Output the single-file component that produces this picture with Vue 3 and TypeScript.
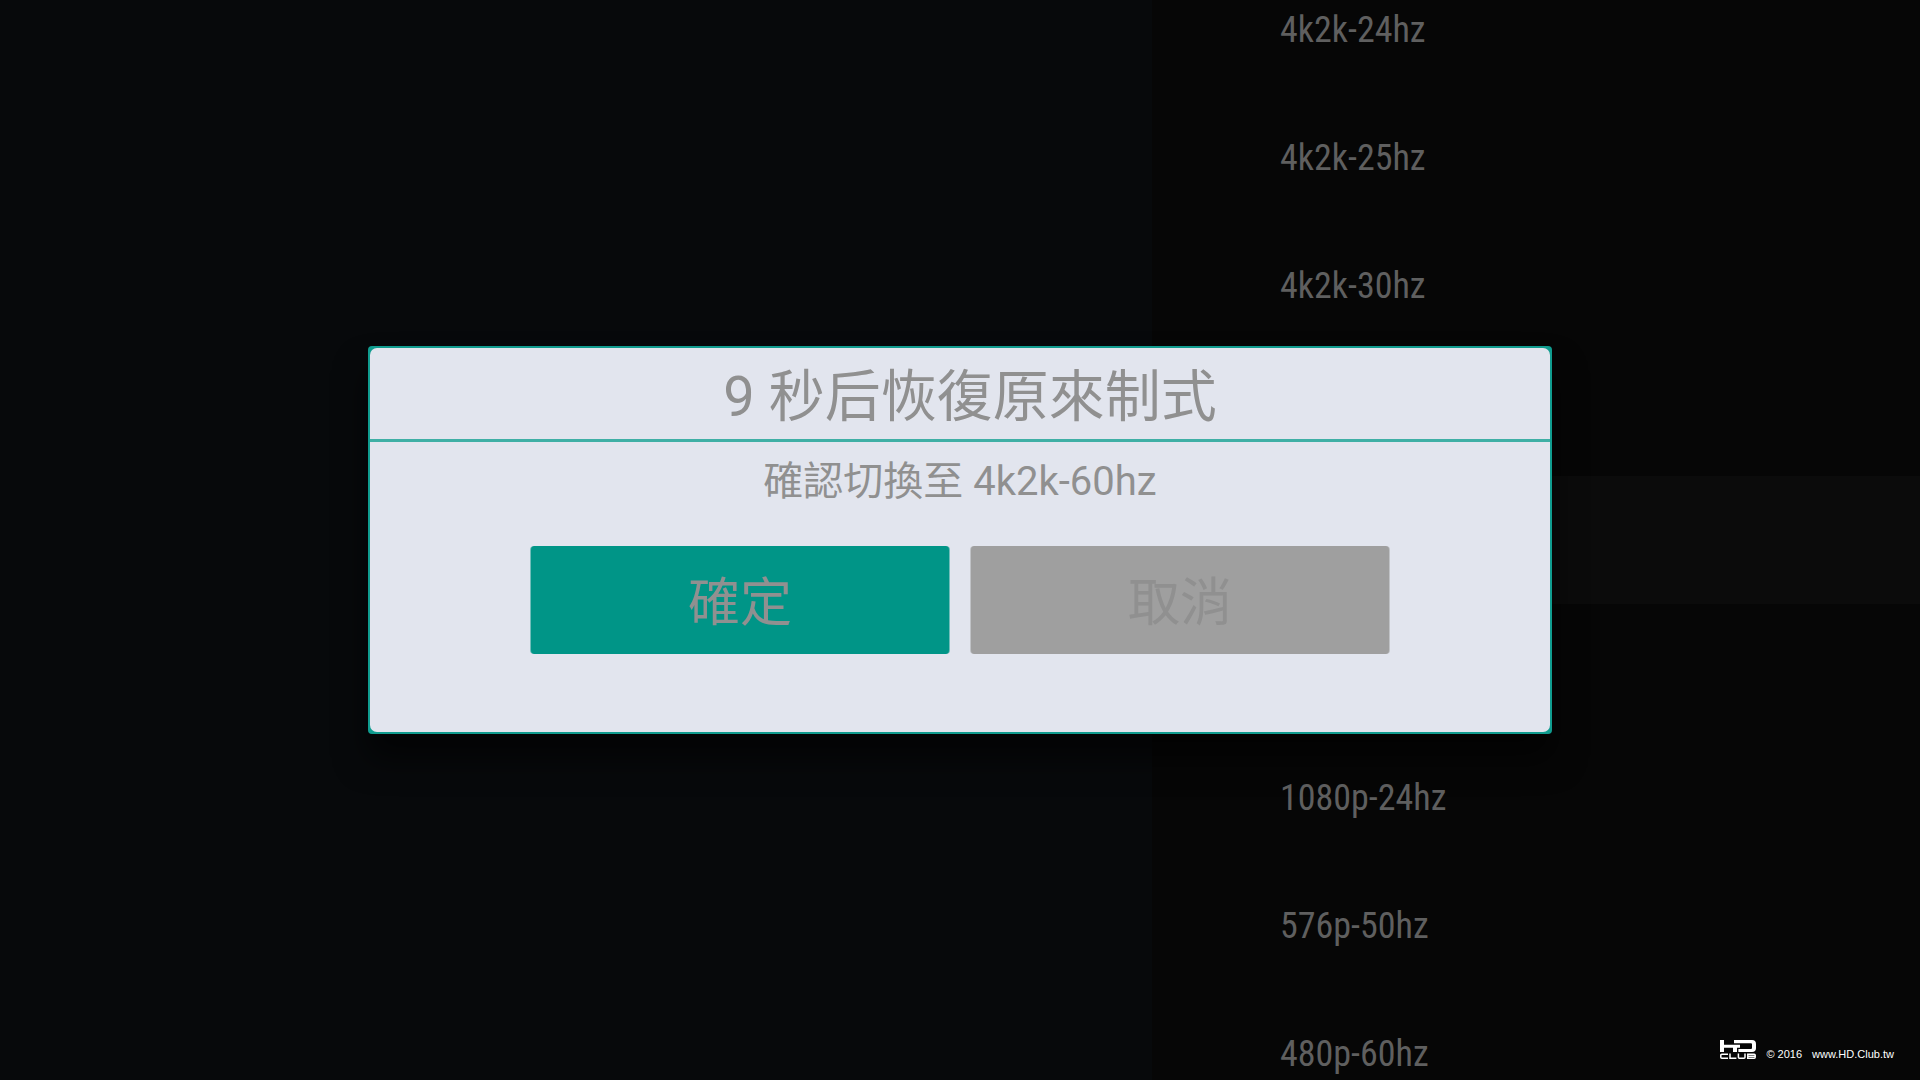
<script setup lang="ts">
interface Mode {
  id: number
  label: string
  selected?: boolean
}

const modes: Mode[] = [
  { id: 1, label: '4k2k-24hz' },
  { id: 2, label: '4k2k-25hz' },
  { id: 3, label: '4k2k-30hz' },
  { id: 4, label: '' },
  { id: 5, label: '', selected: true },
  { id: 6, label: '' },
  { id: 7, label: '1080p-24hz' },
  { id: 8, label: '576p-50hz' },
  { id: 9, label: '480p-60hz' },
]
</script>

<template>
  <main class="screen">
    <aside class="panel">
      <ul class="modes">
        <li v-for="mode in modes" :key="mode.id" class="mode" :class="{ selected: mode.selected }">
          <button v-if="mode.label" type="button" class="mode-button">{{ mode.label }}</button>
        </li>
      </ul>
    </aside>

    <div class="overlay">
      <section class="dialog" role="dialog" aria-labelledby="dialog-title" aria-describedby="dialog-text">
        <div class="sheet">
          <h1 id="dialog-title" class="title">9 秒后恢復原來制式</h1>
          <p id="dialog-text" class="message">確認切換至 4k2k-60hz</p>
          <div class="actions">
            <button type="button" class="action confirm">確定</button>
            <button type="button" class="action cancel">取消</button>
          </div>
        </div>
      </section>
    </div>

    <footer class="credit">
      <svg class="logo" viewBox="0 0 36 19" width="36" height="19" aria-hidden="true">
        <g fill="#fff">
          <path d="M0 0H4V4.8H20V7.8H17V12H13V7.8H4V12H0Z" />
          <path d="M14 0H32Q36 0 36 4V8.3Q36 12 32 12H18.4V9H31Q32 9 32 8V4.2Q32 3.2 31 3.2H14Z" />
        </g>
        <path
          fill="none"
          stroke="#fff"
          stroke-width="1.5"
          d="M8 14.2H1.8Q.8 14.2 .8 15.2V17.2Q.8 18.2 1.8 18.2H8M10 13.4V18.2H16.4M18.4 13.4V17.2Q18.4 18.2 19.4 18.2H24Q25 18.2 25 17.2V13.4M27.8 18.2V14.2H34.2Q35.2 14.2 35.2 15.2V17.2Q35.2 18.2 34.2 18.2H27M27.8 16.2H35"
        />
      </svg>
      <span>© 2016</span>
      <span>www.HD.Club.tw</span>
    </footer>
  </main>
</template>

<style>
body {
  margin: 0;
  background: #07090b;
}
</style>

<style scoped>
.screen {
  position: relative;
  display: flex;
  justify-content: flex-end;
  height: 100vh;
  overflow: hidden;
  background: #07090b;
  font-family: Roboto, 'Noto Sans CJK TC', sans-serif;
}

.panel {
  width: 40%;
  background: #060606;
}

.modes {
  margin: -36px 0 0;
  padding: 0;
  list-style: none;
}

.mode {
  display: flex;
  height: 128px;
}

.mode.selected {
  background: #0b0b0b;
}

.mode-button {
  flex: 1;
  padding: 4px 0 0 128px;
  border: 0;
  background: none;
  color: #5f5f5f;
  font-family: 'Roboto Condensed', Roboto, sans-serif;
  font-size: 36px;
  line-height: 42px;
  text-align: left;
}

.overlay {
  position: absolute;
  inset: 0;
  display: flex;
  align-items: center;
  justify-content: center;
}

.dialog {
  box-sizing: border-box;
  width: 1184px;
  max-width: 100%;
  padding: 2px;
  border-radius: 4px;
  background: #109c8f;
  box-shadow: 0 24px 32px rgba(0, 0, 0, 0.6);
}

.sheet {
  padding-bottom: 78px;
  border-radius: 7px;
  background: #e2e5ee;
  color: #909090;
  text-align: center;
}

.title {
  margin: 0;
  padding: 8px 0 0 20px;
  border-bottom: 3px solid #3fafa5;
  font-size: 56px;
  font-weight: 400;
  line-height: 83px;
}

.message {
  margin: 0;
  padding: 12px 0 36px;
  font-size: 40px;
  font-weight: 400;
  line-height: 56px;
}

.actions {
  display: flex;
  justify-content: center;
  gap: 20px;
}

.action {
  box-sizing: border-box;
  width: 420px;
  height: 108px;
  padding: 0 0 4px;
  border: 0 solid rgba(226, 229, 238, 0.5);
  border-width: 0 1px;
  border-radius: 4px;
  color: #909090;
  font-family: inherit;
  font-size: 52px;
}

.confirm {
  background: #009587;
}

.cancel {
  background: #9f9f9f;
}

.credit {
  position: absolute;
  right: 26px;
  bottom: 21px;
  display: flex;
  align-items: flex-end;
  gap: 10px;
  color: #fff;
  font-family: 'Liberation Sans', Arial, sans-serif;
  font-size: 11px;
  line-height: 10px;
}

.logo {
  display: block;
}
</style>
